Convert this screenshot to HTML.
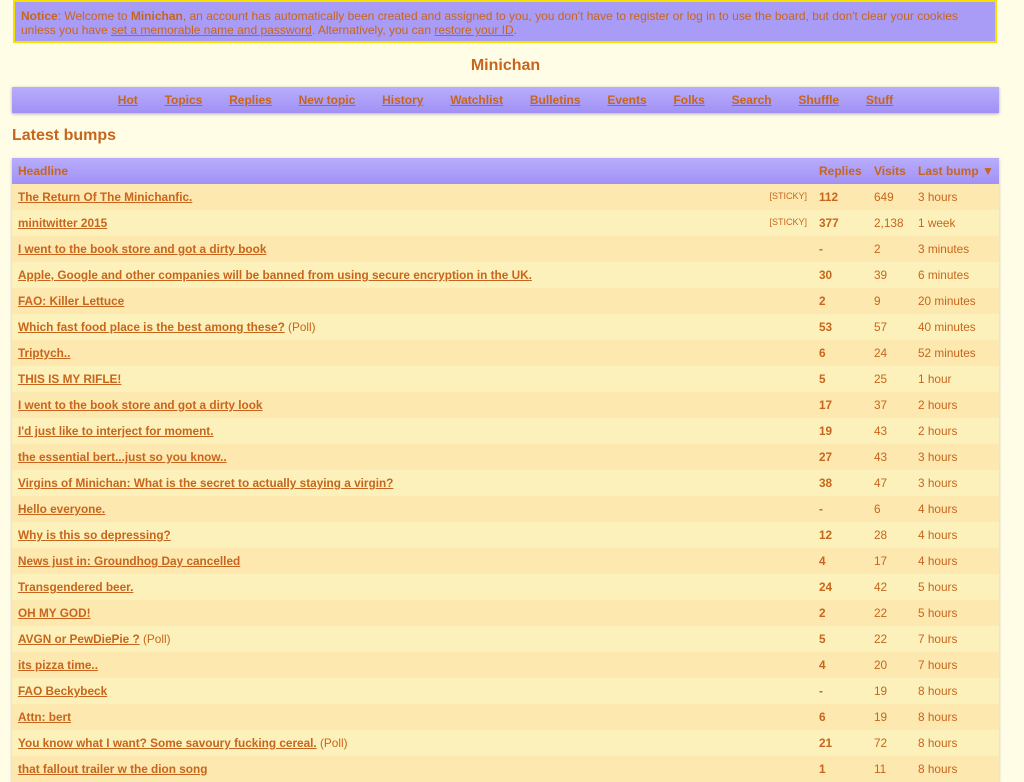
<!DOCTYPE html>
<html><head><meta charset="utf-8"><style>
body{margin:0;background:#fffde6;font-family:"Liberation Sans",sans-serif;font-size:12px;color:#c8651c;width:1024px;height:768px;overflow:hidden;position:relative}
a{color:#c8651c}
#notice{position:absolute;left:13px;top:0;width:960px;height:39px;border:2px solid #f5e000;background:#a99cf7;padding:0 14px 0 6px;box-sizing:content-box;line-height:14px;font-size:12px;color:#c8651c}
#notice div{padding-top:7px}
h1{position:absolute;left:0;width:1011px;top:56px;margin:0;text-align:center;font-size:16px;line-height:20px}
#nav{position:absolute;left:12px;top:87px;width:987px;height:26px;background:linear-gradient(#b8adfb,#a191f5);box-shadow:0 1px 3px rgba(0,0,0,.3);text-align:center;line-height:26px;font-weight:bold;font-size:12px}
#nav a{margin:0 13.4px}
h2{position:absolute;left:12px;top:126px;margin:0;font-size:16px;line-height:20px}
table{position:absolute;left:12px;top:158px;width:987px;border-collapse:collapse;box-shadow:0 1px 3px rgba(0,0,0,.25);table-layout:fixed}
th{background:linear-gradient(#b8adfb,#a191f5);text-align:left;height:26px;padding:0 6px;font-size:12px;white-space:nowrap}
td{height:26px;padding:0 6px;font-size:11.8px;white-space:nowrap}
tr:nth-child(odd) td{background:#fdf1bb}
tr:nth-child(even) td{background:#fde8b0}
td.h a{font-weight:bold}
td.r{font-weight:bold}
.st{float:right;font-size:9px;margin-top:1px}
</style></head><body>
<div id="notice"><div><b>Notice</b>: Welcome to <b>Minichan</b>, an account has automatically been created and assigned to you, you don't have to register or log in to use the board, but don't clear your cookies unless you have <a href="#">set a memorable name and password</a>. Alternatively, you can <a href="#">restore your ID</a>.</div></div>
<h1>Minichan</h1>
<div id="nav"><a href="#">Hot</a><a href="#">Topics</a><a href="#">Replies</a><a href="#">New topic</a><a href="#">History</a><a href="#">Watchlist</a><a href="#">Bulletins</a><a href="#">Events</a><a href="#">Folks</a><a href="#">Search</a><a href="#">Shuffle</a><a href="#">Stuff</a></div>
<h2>Latest bumps</h2>
<table>
<colgroup><col><col style="width:55px"><col style="width:44px"><col style="width:87px"></colgroup>
<tr><th>Headline</th><th>Replies</th><th>Visits</th><th>Last bump ▼</th></tr>
<tr><td class="h"><a href="#">The Return Of The Minichanfic.</a><span class="st">[STICKY]</span></td><td class="r">112</td><td>649</td><td>3 hours</td></tr>
<tr><td class="h"><a href="#">minitwitter 2015</a><span class="st">[STICKY]</span></td><td class="r">377</td><td>2,138</td><td>1 week</td></tr>
<tr><td class="h"><a href="#">I went to the book store and got a dirty book</a></td><td class="r">-</td><td>2</td><td>3 minutes</td></tr>
<tr><td class="h"><a href="#">Apple, Google and other companies will be banned from using secure encryption in the UK.</a></td><td class="r">30</td><td>39</td><td>6 minutes</td></tr>
<tr><td class="h"><a href="#">FAO: Killer Lettuce</a></td><td class="r">2</td><td>9</td><td>20 minutes</td></tr>
<tr><td class="h"><a href="#">Which fast food place is the best among these?</a> (Poll)</td><td class="r">53</td><td>57</td><td>40 minutes</td></tr>
<tr><td class="h"><a href="#">Triptych..</a></td><td class="r">6</td><td>24</td><td>52 minutes</td></tr>
<tr><td class="h"><a href="#">THIS IS MY RIFLE!</a></td><td class="r">5</td><td>25</td><td>1 hour</td></tr>
<tr><td class="h"><a href="#">I went to the book store and got a dirty look</a></td><td class="r">17</td><td>37</td><td>2 hours</td></tr>
<tr><td class="h"><a href="#">I'd just like to interject for moment.</a></td><td class="r">19</td><td>43</td><td>2 hours</td></tr>
<tr><td class="h"><a href="#">the essential bert...just so you know..</a></td><td class="r">27</td><td>43</td><td>3 hours</td></tr>
<tr><td class="h"><a href="#">Virgins of Minichan: What is the secret to actually staying a virgin?</a></td><td class="r">38</td><td>47</td><td>3 hours</td></tr>
<tr><td class="h"><a href="#">Hello everyone.</a></td><td class="r">-</td><td>6</td><td>4 hours</td></tr>
<tr><td class="h"><a href="#">Why is this so depressing?</a></td><td class="r">12</td><td>28</td><td>4 hours</td></tr>
<tr><td class="h"><a href="#">News just in: Groundhog Day cancelled</a></td><td class="r">4</td><td>17</td><td>4 hours</td></tr>
<tr><td class="h"><a href="#">Transgendered beer.</a></td><td class="r">24</td><td>42</td><td>5 hours</td></tr>
<tr><td class="h"><a href="#">OH MY GOD!</a></td><td class="r">2</td><td>22</td><td>5 hours</td></tr>
<tr><td class="h"><a href="#">AVGN or PewDiePie ?</a> (Poll)</td><td class="r">5</td><td>22</td><td>7 hours</td></tr>
<tr><td class="h"><a href="#">its pizza time..</a></td><td class="r">4</td><td>20</td><td>7 hours</td></tr>
<tr><td class="h"><a href="#">FAO Beckybeck</a></td><td class="r">-</td><td>19</td><td>8 hours</td></tr>
<tr><td class="h"><a href="#">Attn: bert</a></td><td class="r">6</td><td>19</td><td>8 hours</td></tr>
<tr><td class="h"><a href="#">You know what I want? Some savoury fucking cereal.</a> (Poll)</td><td class="r">21</td><td>72</td><td>8 hours</td></tr>
<tr><td class="h"><a href="#">that fallout trailer w the dion song</a></td><td class="r">1</td><td>11</td><td>8 hours</td></tr>
</table>
</body></html>
